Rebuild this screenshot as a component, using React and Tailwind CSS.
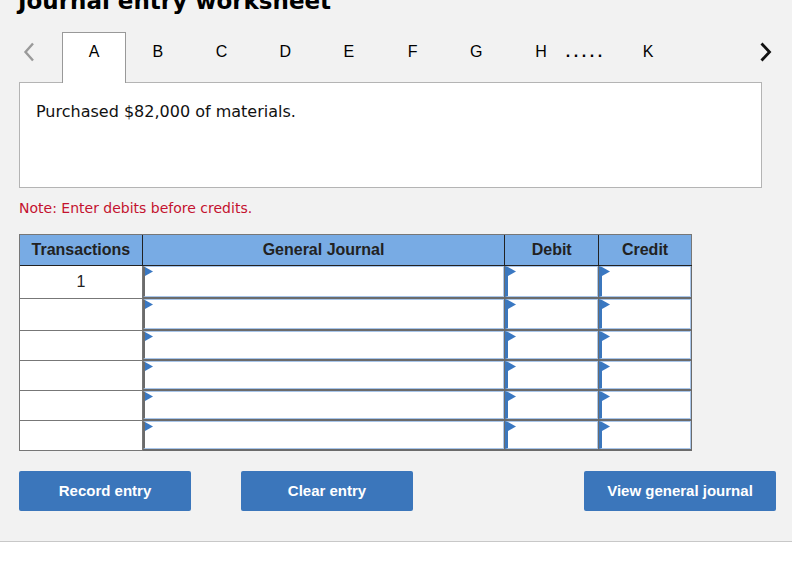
import React from 'react';

const tabs = ['B', 'C', 'D', 'E', 'F', 'G'];
const rows = [
  { label: '1', h: 'h-[33px]' },
  { label: '', h: 'h-[32px]' },
  { label: '', h: 'h-[30px]' },
  { label: '', h: 'h-[30px]' },
  { label: '', h: 'h-[30px]' },
  { label: '', h: 'h-[30px]' },
];

const Flag = () => (
  <svg className="absolute left-0 top-0" width="8" height="9" viewBox="0 0 8 9">
    <polygon points="0,0 8,4.5 0,9" fill="#3a78c2" />
  </svg>
);

const InputCell = ({ width, first }) => (
  <div className={`${width} h-full border-r border-b-2 border-[#6b6b6b] bg-white`}>
    <div
      className={`relative h-full border border-[#a9c6ea] ${
        first ? 'border-l-2 border-l-[#6b6b6b]' : 'border-l-[3px] border-l-[#3b77bd]'
      }`}
    >
      <Flag />
    </div>
  </div>
);

const App = () => {
  return (
    <div className="w-[792px] h-[562px] overflow-hidden bg-white" style={{ fontFamily: '"Liberation Sans", Arial, sans-serif' }}>
      <div className="flow-root bg-[#f2f2f2] border-b border-[#c8c8c8] pl-[19px] pr-[16px] h-[542px]">
        {/* Title, cut off at the top */}
        <div
          className="mt-[-12px] ml-[-1px] text-[23px] leading-[26px] font-bold text-black whitespace-nowrap"
          style={{ fontFamily: '"DejaVu Sans", Verdana, sans-serif' }}
        >
          Journal entry worksheet
        </div>

        {/* Tabs */}
        <div className="mt-[18px] flex h-[50px] text-[16px] leading-[20px] text-black">
          <div className="w-[43px] pt-[10px] pl-[4px]">
            <svg width="12" height="20" viewBox="0 0 12 20">
              <polyline points="10,1.5 2.5,10 10,18.5" fill="none" stroke="#9a9a9a" strokeWidth="2.4" />
            </svg>
          </div>
          <div className="relative z-10 w-[64px] h-[51px] border border-b-0 border-[#999] bg-white pt-[9px] text-center">
            A
          </div>
          {tabs.map((t) => (
            <div key={t} className="w-[63.7px] pt-[10px] text-center">
              {t}
            </div>
          ))}
          <div className="w-[108px] pt-[10px] pl-[27px] flex">
            <span>H</span>
            <span className="ml-[19px] font-bold tracking-[3.6px]">.....</span>
          </div>
          <div className="w-[64px] pt-[10px] text-center">K</div>
          <div className="ml-auto mr-[4px] pt-[10px]">
            <svg width="13" height="20" viewBox="0 0 13 20">
              <polyline points="2.5,1.5 10.5,10 2.5,18.5" fill="none" stroke="#111" strokeWidth="2.8" />
            </svg>
          </div>
        </div>

        {/* Question box */}
        <div
          className="w-[743px] h-[106px] border border-[#b4b4b4] bg-white pl-[16px] pt-[19px] text-[16px] leading-[20px] text-[#111]"
          style={{ fontFamily: '"DejaVu Sans", Verdana, sans-serif' }}
        >
          Purchased $82,000 of materials.
        </div>

        <div
          className="mt-[12px] text-[14px] leading-[17px] text-[#c4122f]"
          style={{ fontFamily: '"DejaVu Sans", Verdana, sans-serif' }}
        >
          Note: Enter debits before credits.
        </div>

        {/* Journal table */}
        <div className="mt-[17px] w-[673px] border-l border-t border-[#777]">
          <div className="flex h-[31px] bg-[#78abe4] border-b border-[#222] text-[16px] font-bold text-[#222]">
            <div className="w-[123px] border-r border-[#222] flex items-center justify-center">Transactions</div>
            <div className="w-[363px] border-r border-[#222] flex items-center justify-center">General Journal</div>
            <div className="w-[94px] border-r border-[#222] flex items-center justify-center">Debit</div>
            <div className="w-[93px] border-r border-[#777] flex items-center justify-center">Credit</div>
          </div>
          {rows.map((r, i) => (
            <div key={i} className={`flex ${r.h}`}>
              <div className="w-[123px] h-full border-r border-b border-[#777] bg-white flex items-center justify-center text-[16px] text-[#222]">
                {r.label}
              </div>
              <InputCell width="w-[363px]" first />
              <InputCell width="w-[94px]" />
              <InputCell width="w-[93px]" />
            </div>
          ))}
        </div>

        {/* Buttons */}
        <div className="mt-[20px] flex text-[15px] font-bold text-white">
          <button className="w-[172px] h-[40px] rounded-[2px] bg-[#3b76bb]">Record entry</button>
          <button className="ml-[50px] w-[172px] h-[40px] rounded-[2px] bg-[#3b76bb]">Clear entry</button>
          <button className="ml-auto w-[192px] h-[40px] rounded-[2px] bg-[#3b76bb]">View general journal</button>
        </div>
      </div>
    </div>
  );
};

export default App;
